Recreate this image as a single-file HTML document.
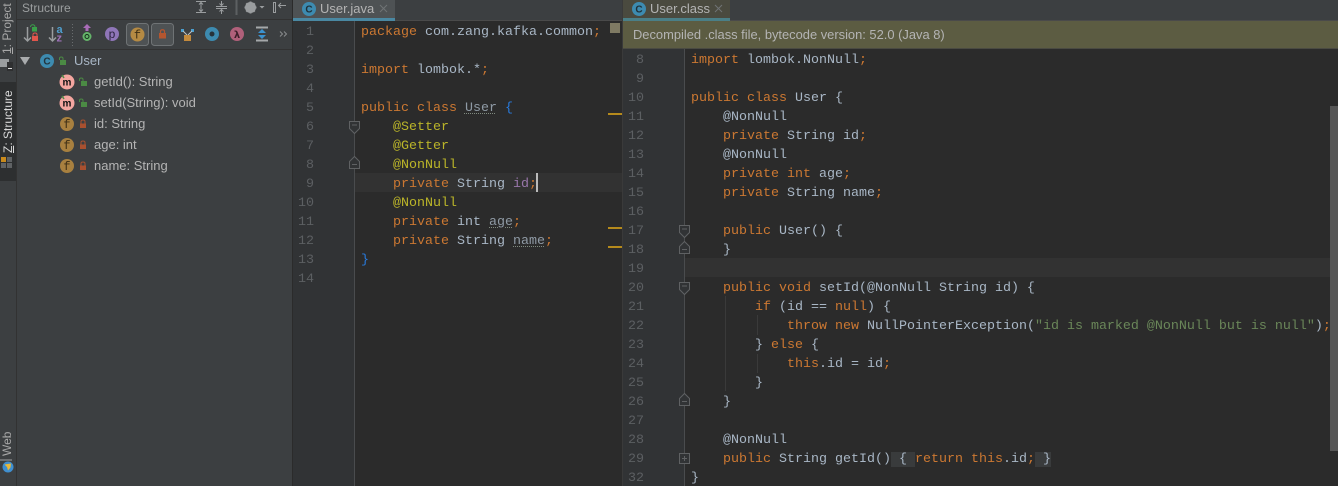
<!DOCTYPE html>
<html><head><meta charset="utf-8">
<style>
html,body{margin:0;padding:0;background:#2b2b2b}
#r{position:relative;width:1338px;height:486px;overflow:hidden;background:#2b2b2b;font-family:"Liberation Sans",sans-serif}
.a{position:absolute}
.l{position:absolute;margin-top:1px;white-space:pre;font:13.33px/19px "Liberation Mono",monospace;color:#a9b7c6;height:19px}
.n{position:absolute;margin-top:1px;width:24px;text-align:right;font:13.33px/19px "Liberation Mono",monospace;color:#5c5f62;height:19px}
.k{color:#cc7832}.y{color:#bbb529}.s{color:#6a8759}.b{color:#287bde}.p{color:#9876aa}
.w{text-decoration:underline dotted #7f8a7f 1px;text-underline-offset:2px;color:#8f9aa5}
.t{position:absolute;font-size:13px;line-height:17px;color:#b4b4b4;white-space:nowrap}
.v{position:absolute;font-size:12px;line-height:14px;color:#bbbbbb;white-space:nowrap;transform:rotate(-90deg);transform-origin:0 0}
.fold{background:#393b3c}
</style></head><body><div id="r">

<!-- left stripe -->
<div class="a" style="left:0;top:0;width:16px;height:486px;background:#3c3f41"></div>
<div class="a" style="left:0;top:82px;width:16px;height:99px;background:#2d2f30"></div>
<div class="a" style="left:16px;top:0;width:1px;height:486px;background:#323232"></div>
<div class="v" style="left:0;top:54px;color:#a8a8a8"><u>1</u>: Project</div>
<div class="a" style="left:0;top:59px;width:9px;height:8px;background:#9a9d9f"></div>
<div class="a" style="left:7px;top:62px;width:6px;height:9px;background:#2f3031"></div>
<div class="a" style="left:8px;top:68px;width:4px;height:1px;background:#ddd"></div>
<div class="v" style="left:1px;top:153px;color:#d8d8d8"><u>Z</u>: Structure</div>
<svg class="a" style="left:0;top:156px" width="13" height="13"><rect x="1" y="1" width="5" height="5" fill="#c98a1c"/><rect x="7" y="1" width="5" height="5" fill="#5f6264"/><rect x="1" y="7" width="5" height="5" fill="#5f6264"/><rect x="7" y="7" width="5" height="5" fill="#5f6264"/></svg>
<div class="v" style="left:0;top:456px;color:#a8a8a8">Web</div>
<div class="a" style="left:0;top:459px;width:12px;height:2px;background:#6e7072"></div>
<svg class="a" style="left:2px;top:461px" width="12" height="12"><circle cx="6" cy="6" r="5.500" fill="#3f8fd0"/><path d="M2.500 3.500 L9 2.500 L8.500 6.500 L6 9.500 L5 6Z" fill="#e8b83a"/></svg>

<!-- structure panel -->
<div class="a" style="left:17px;top:0;width:275px;height:486px;background:#3c3f41"></div>
<div class="a" style="left:292px;top:0;width:1px;height:486px;background:#2b2b2b"></div>
<div class="a" style="left:17px;top:19px;width:275px;height:1px;background:#323232"></div>
<div class="a" style="left:17px;top:49px;width:275px;height:1px;background:#323232"></div>
<div class="a" style="left:22px;top:0;font-size:12px;line-height:16px;color:#9b9e9f">Structure</div>

<!-- header icons -->
<svg class="a" style="left:190px;top:0" width="102" height="18" fill="none" stroke="#9a9d9f" stroke-width="1">
<path d="M6 1.500H16M6 12.500H16M11 2V12M9 4.500L11 2.500L13 4.500M9 9.500L11 11.500L13 9.500"/>
<path d="M26 6.500H37M31.500 1V5M29.500 3.500L31.500 5.500L33.500 3.500M26 8.500H37M31.500 14V9.500M29.500 11.500L31.500 9.500L33.500 11.500"/>
<path d="M46.500 0V15" stroke="#5d6062" stroke-width="2"/>
<circle cx="60.500" cy="7.500" r="4" stroke-width="3"/>
<path d="M60.500 1.500V13.500M54.500 7.500H66.500M56.300 3.300L64.700 11.700M64.700 3.300L56.300 11.700" stroke-width="2"/>
<path d="M69.500 6H74.500L72 8.500Z" fill="#9a9d9f" stroke="none"/>
<path d="M83.500 2.500H85.500V12.500H83.500ZM96 5.500H88.500M91 3L88.500 5.500L91 8"/>
</svg>

<!-- toolbar -->
<svg class="a" style="left:17px;top:20px" width="275" height="29" fill="none">
<!-- sort visibility -->
<path d="M10.500 7V21M7 17.500L10.500 21L14 17.500" stroke="#9a9d9f" stroke-width="1.500"/>
<rect x="15" y="7" width="5" height="4.500" fill="#3aa04a"/><path d="M13.500 7C13.500 4 18 4 18 7" stroke="#3aa04a"/>
<rect x="15" y="16" width="6" height="5" fill="#e0564c"/><path d="M16 16V14.500C16 12.500 20 12.500 20 14.500V16" stroke="#e0564c"/>
<!-- sort alpha -->
<path d="M35.500 7V21M32 17.500L35.500 21L39 17.500" stroke="#9a9d9f" stroke-width="1.500"/>
<text x="39.500" y="13" font-family="Liberation Sans" font-size="11" font-weight="bold" fill="#4f9fcf">a</text>
<text x="39.500" y="21.500" font-family="Liberation Sans" font-size="11" font-weight="bold" fill="#9d72b8">z</text>
<path d="M55.500 4V26" stroke="#6a6d6f" stroke-dasharray="1 2"/>
<!-- inherited -->
<path d="M70 4L66 8H68.500V11H71.500V8H74Z" fill="#a96cb8"/>
<circle cx="70" cy="16.500" r="4.500" fill="#65b56a"/><circle cx="70" cy="16.500" r="2" fill="none" stroke="#14301a"/>
<!-- p -->
<circle cx="95" cy="14" r="7" fill="#8f76b8"/>
<text x="95" y="18" text-anchor="middle" font-family="Liberation Mono" font-size="12" fill="#2d2440">p</text>
<!-- f toggled -->
<rect x="109.500" y="3.500" width="22" height="22" rx="3" fill="#4e5254" stroke="#6f7375"/>
<circle cx="120.500" cy="14.500" r="7" fill="#b58a43"/>
<text x="120.500" y="18.500" text-anchor="middle" font-family="Liberation Mono" font-size="12" fill="#3d2e15">f</text>
<!-- lock toggled -->
<rect x="134.500" y="3.500" width="22" height="22" rx="3" fill="#4e5254" stroke="#6f7375"/>
<rect x="142" y="13" width="7" height="5.500" fill="#b4562f"/><path d="M143.500 13V11.500C143.500 9.200 147.500 9.200 147.500 11.500V13" stroke="#b4562f" stroke-width="1.200"/>
<!-- hierarchy -->
<rect x="164" y="9" width="3" height="3" fill="#4a9fd0"/><rect x="174" y="9" width="3" height="3" fill="#4a9fd0"/>
<path d="M166 11L170 15M175 11L171 15" stroke="#c0c4c6"/>
<rect x="167" y="15" width="7" height="6" fill="#c48a3c"/>
<!-- circle -->
<circle cx="195" cy="14" r="7" fill="#3d8bb0"/><circle cx="195" cy="14" r="2.500" fill="#27333a"/>
<!-- lambda -->
<circle cx="220" cy="14" r="7" fill="#b0607a"/>
<text x="220" y="18" text-anchor="middle" font-family="DejaVu Sans" font-size="10" font-weight="bold" fill="#3d1f2a">λ</text>
<!-- expand -->
<path d="M239 7.500H251M239 20.500H251" stroke="#a5a8aa" stroke-width="2"/>
<path d="M245 9L241 13H249ZM245 19L241 15H249Z" fill="#3b92cf"/>
<!-- chevrons -->
<path d="M263 11.500L265.500 14L263 16.500M267 11.500L269.500 14L267 16.500" stroke="#8a8d8f"/>
</svg>

<!-- tree -->
<svg class="a" style="left:17px;top:50px" width="275" height="130" fill="none">
<path d="M3 7H13L8 15Z" fill="#a9acae"/>
<circle cx="30" cy="11" r="7" fill="#3d8bb0"/><text x="30" y="14.500" text-anchor="middle" font-family="Liberation Sans" font-size="10" font-weight="bold" fill="#23343d">C</text>
<rect x="43" y="10" width="6" height="5" fill="#4b8a44"/><path d="M42.500 10V8.500C42.500 6.500 46 6.500 46 8.500V10" stroke="#4b8a44"/>
<circle cx="50" cy="32" r="7.500" fill="#f4a6a0"/><text x="50" y="35.500" text-anchor="middle" font-family="Liberation Sans" font-size="10" font-weight="bold" fill="#111">m</text><path d="M45 25L47 28" stroke="#4b8a44" stroke-width="1.500"/>
<rect x="64" y="31" width="6" height="5" fill="#4b8a44"/><path d="M62.500 31V29.500C62.500 27.500 66 27.500 66 29.500V31" stroke="#4b8a44"/>
<circle cx="50" cy="53" r="7.500" fill="#f4a6a0"/><text x="50" y="56.500" text-anchor="middle" font-family="Liberation Sans" font-size="10" font-weight="bold" fill="#111">m</text><path d="M45 46L47 49" stroke="#4b8a44" stroke-width="1.500"/>
<rect x="64" y="52" width="6" height="5" fill="#4b8a44"/><path d="M62.500 52V50.500C62.500 48.500 66 48.500 66 50.500V52" stroke="#4b8a44"/>
<g font-family="Liberation Mono" font-size="12" fill="#3d2e15" text-anchor="middle">
<circle cx="50" cy="74" r="7" fill="#a8803f"/><text x="50" y="78">f</text>
<circle cx="50" cy="95" r="7" fill="#a8803f"/><text x="50" y="99">f</text>
<circle cx="50" cy="116" r="7" fill="#a8803f"/><text x="50" y="120">f</text>
</g>
<g fill="#a9502f" stroke="none">
<rect x="63" y="73.500" width="6" height="4.500"/><path d="M64 73.500V71.500C64 69.500 68 69.500 68 71.500V73.500" fill="none" stroke="#a9502f"/>
<rect x="63" y="94.500" width="6" height="4.500"/><path d="M64 94.500V92.500C64 90.500 68 90.500 68 92.500V94.500" fill="none" stroke="#a9502f"/>
<rect x="63" y="115.500" width="6" height="4.500"/><path d="M64 115.500V113.500C64 111.500 68 111.500 68 113.500V115.500" fill="none" stroke="#a9502f"/>
</g>
</svg>
<div class="t" style="left:74px;top:52px;color:#a9b7c6">User</div>
<div class="t" style="left:94px;top:73px">getId(): String</div>
<div class="t" style="left:94px;top:94px">setId(String): void</div>
<div class="t" style="left:94px;top:115px">id: String</div>
<div class="t" style="left:94px;top:136px">age: int</div>
<div class="t" style="left:94px;top:157px">name: String</div>

<!-- tab bars -->
<div class="a" style="left:293px;top:0;width:1045px;height:21px;background:#3c3f41"></div>
<div class="a" style="left:293px;top:20px;width:1045px;height:1px;background:#4a4a4a"></div>
<div class="a" style="left:293px;top:0;width:102px;height:18px;background:#4e5254"></div>
<div class="a" style="left:293px;top:18px;width:102px;height:3px;background:#4a88a2"></div>
<svg class="a" style="left:301px;top:1px" width="16" height="16"><circle cx="8" cy="8" r="7" fill="#3d8bb0"/><text x="8" y="11.500" text-anchor="middle" font-family="Liberation Sans" font-size="10" font-weight="bold" fill="#1f2f37">C</text></svg>
<div class="a" style="left:320px;top:0;font-size:13px;line-height:17px;color:#b4b4b4">User.java</div>
<svg class="a" style="left:379px;top:4px" width="9" height="9"><path d="M1 1L8 8M8 1L1 8" stroke="#6f7375"/></svg>
<div class="a" style="left:622px;top:0;width:1px;height:486px;background:#3a3a3a"></div>
<div class="a" style="left:623px;top:0;width:107px;height:18px;background:#4a4a3f"></div>
<div class="a" style="left:623px;top:18px;width:107px;height:3px;background:#4a7f87"></div>
<svg class="a" style="left:631px;top:1px" width="16" height="16"><circle cx="8" cy="8" r="7" fill="#3d8bb0"/><text x="8" y="11.500" text-anchor="middle" font-family="Liberation Sans" font-size="10" font-weight="bold" fill="#1f2f37">C</text></svg>
<div class="a" style="left:650px;top:0;font-size:13px;line-height:17px;color:#b4b4b4">User.class</div>
<svg class="a" style="left:714px;top:4px" width="9" height="9"><path d="M1 1L8 8M8 1L1 8" stroke="#6f7375"/></svg>

<!-- left editor -->
<div class="a" style="left:293px;top:21px;width:61px;height:465px;background:#313335"></div>
<div class="a" style="left:354px;top:21px;width:1px;height:465px;background:#4a4c4e"></div>
<div class="a" style="left:355px;top:173px;width:267px;height:19px;background:#323232"></div>
<div class="n" style="left:290px;top:22px">1</div>
<div class="n" style="left:290px;top:41px">2</div>
<div class="n" style="left:290px;top:60px">3</div>
<div class="n" style="left:290px;top:79px">4</div>
<div class="n" style="left:290px;top:98px">5</div>
<div class="n" style="left:290px;top:117px">6</div>
<div class="n" style="left:290px;top:136px">7</div>
<div class="n" style="left:290px;top:155px">8</div>
<div class="n" style="left:290px;top:174px">9</div>
<div class="n" style="left:290px;top:193px">10</div>
<div class="n" style="left:290px;top:212px">11</div>
<div class="n" style="left:290px;top:231px">12</div>
<div class="n" style="left:290px;top:250px">13</div>
<div class="n" style="left:290px;top:269px">14</div>
<svg class="a" style="left:345px;top:115px" width="20" height="60" fill="#313335" stroke="#5f6163">
<path d="M4.500 6.500H14.500V13.500L9.500 18.500L4.500 13.500Z"/><path d="M7 10H12"/>
<path d="M4.500 53.500H14.500V46.500L9.500 41.500L4.500 46.500Z"/><path d="M7 49.500H12"/>
</svg>
<div class="l" style="left:361px;top:22px"><span class="k">package</span> com.zang.kafka.common<span class="k">;</span></div>
<div class="l" style="left:361px;top:60px"><span class="k">import</span> lombok.*<span class="k">;</span></div>
<div class="l" style="left:361px;top:98px"><span class="k">public class</span> <span class="w">User</span> <span class="b">{</span></div>
<div class="l y" style="left:393px;top:117px">@Setter</div>
<div class="l y" style="left:393px;top:136px">@Getter</div>
<div class="l y" style="left:393px;top:155px">@NonNull</div>
<div class="l" style="left:393px;top:174px"><span class="k">private</span> String <span class="p">id</span><span class="k">;</span></div>
<div class="a" style="left:536px;top:173px;width:2px;height:19px;background:#bbbbbb"></div>
<div class="l y" style="left:393px;top:193px">@NonNull</div>
<div class="l" style="left:393px;top:212px"><span class="k">private</span> int <span class="w">age</span><span class="k">;</span></div>
<div class="l" style="left:393px;top:231px"><span class="k">private</span> String <span class="w">name</span><span class="k">;</span></div>
<div class="l b" style="left:361px;top:250px">}</div>
<div class="a" style="left:610px;top:23px;width:10px;height:10px;background:#7f7a63"></div>
<div class="a" style="left:608px;top:113px;width:14px;height:2px;background:#b58a1c"></div>
<div class="a" style="left:608px;top:227px;width:14px;height:2px;background:#b58a1c"></div>
<div class="a" style="left:608px;top:246px;width:14px;height:2px;background:#b58a1c"></div>

<!-- right editor -->
<div class="a" style="left:623px;top:21px;width:715px;height:27px;background:#5c5c42;border-bottom:1px solid #4a4a42"></div>
<div class="a" style="left:633px;top:26px;font-size:12.9px;line-height:17px;color:#b4b4b4">Decompiled .class file, bytecode version: 52.0 (Java 8)</div>
<div class="a" style="left:623px;top:49px;width:61px;height:437px;background:#313335"></div>
<div class="a" style="left:684px;top:49px;width:1px;height:437px;background:#4a4c4e"></div>
<div class="a" style="left:685px;top:258px;width:653px;height:19px;background:#323232"></div>
<div class="a" style="left:725px;top:296px;width:1px;height:95px;background:#3a3a3a"></div>
<div class="a" style="left:757px;top:315px;width:1px;height:20px;background:#3a3a3a"></div>
<div class="a" style="left:757px;top:354px;width:1px;height:19px;background:#3a3a3a"></div>

<div class="n" style="left:620px;top:50px">8</div>
<div class="n" style="left:620px;top:69px">9</div>
<div class="n" style="left:620px;top:88px">10</div>
<div class="n" style="left:620px;top:107px">11</div>
<div class="n" style="left:620px;top:126px">12</div>
<div class="n" style="left:620px;top:145px">13</div>
<div class="n" style="left:620px;top:164px">14</div>
<div class="n" style="left:620px;top:183px">15</div>
<div class="n" style="left:620px;top:202px">16</div>
<div class="n" style="left:620px;top:221px">17</div>
<div class="n" style="left:620px;top:240px">18</div>
<div class="n" style="left:620px;top:259px">19</div>
<div class="n" style="left:620px;top:278px">20</div>
<div class="n" style="left:620px;top:297px">21</div>
<div class="n" style="left:620px;top:316px">22</div>
<div class="n" style="left:620px;top:335px">23</div>
<div class="n" style="left:620px;top:354px">24</div>
<div class="n" style="left:620px;top:373px">25</div>
<div class="n" style="left:620px;top:392px">26</div>
<div class="n" style="left:620px;top:411px">27</div>
<div class="n" style="left:620px;top:430px">28</div>
<div class="n" style="left:620px;top:449px">29</div>
<div class="n" style="left:620px;top:468px">32</div>

<svg class="a" style="left:675px;top:219px" width="20" height="250" fill="#313335" stroke="#5f6163">
<path d="M4.500 6.500H14.500V13.500L9.500 18.500L4.500 13.500Z"/><path d="M7 10H12"/>
<path d="M4.500 34.500H14.500V27.500L9.500 22.500L4.500 27.500Z"/><path d="M7 30.500H12"/>
<path d="M4.500 63.500H14.500V70.500L9.500 75.500L4.500 70.500Z"/><path d="M7 67H12"/>
<path d="M4.500 186.500H14.500V179.500L9.500 174.500L4.500 179.500Z"/><path d="M7 182.500H12"/>
<rect x="4.500" y="234.500" width="10" height="10"/><path d="M7 239.500H12M9.500 237V242"/>
</svg>

<div class="l" style="left:691px;top:50px"><span class="k">import</span> lombok.NonNull<span class="k">;</span></div>
<div class="l" style="left:691px;top:88px"><span class="k">public class</span> User {</div>
<div class="l" style="left:723px;top:107px">@NonNull</div>
<div class="l" style="left:723px;top:126px"><span class="k">private</span> String id<span class="k">;</span></div>
<div class="l" style="left:723px;top:145px">@NonNull</div>
<div class="l" style="left:723px;top:164px"><span class="k">private int</span> age<span class="k">;</span></div>
<div class="l" style="left:723px;top:183px"><span class="k">private</span> String name<span class="k">;</span></div>
<div class="l" style="left:723px;top:221px"><span class="k">public</span> User() {</div>
<div class="l" style="left:723px;top:240px">}</div>
<div class="l" style="left:723px;top:278px"><span class="k">public void</span> setId(@NonNull String id) {</div>
<div class="l" style="left:755px;top:297px"><span class="k">if</span> (id == <span class="k">null</span>) {</div>
<div class="l" style="left:787px;top:316px"><span class="k">throw new</span> NullPointerException(<span class="s">"id is marked @NonNull but is null"</span>)<span class="k">;</span></div>
<div class="l" style="left:755px;top:335px">} <span class="k">else</span> {</div>
<div class="l" style="left:787px;top:354px"><span class="k">this</span>.id = id<span class="k">;</span></div>
<div class="l" style="left:755px;top:373px">}</div>
<div class="l" style="left:723px;top:392px">}</div>
<div class="l" style="left:723px;top:430px">@NonNull</div>
<div class="l" style="left:723px;top:449px"><span class="k">public</span> String getId()<span class="fold"> { </span><span class="k">return this</span>.id<span class="k">;</span><span class="fold"> }</span></div>
<div class="l" style="left:691px;top:468px">}</div>

<div class="a" style="left:1330px;top:106px;width:8px;height:345px;background:#565656"></div>
</div></body></html>
